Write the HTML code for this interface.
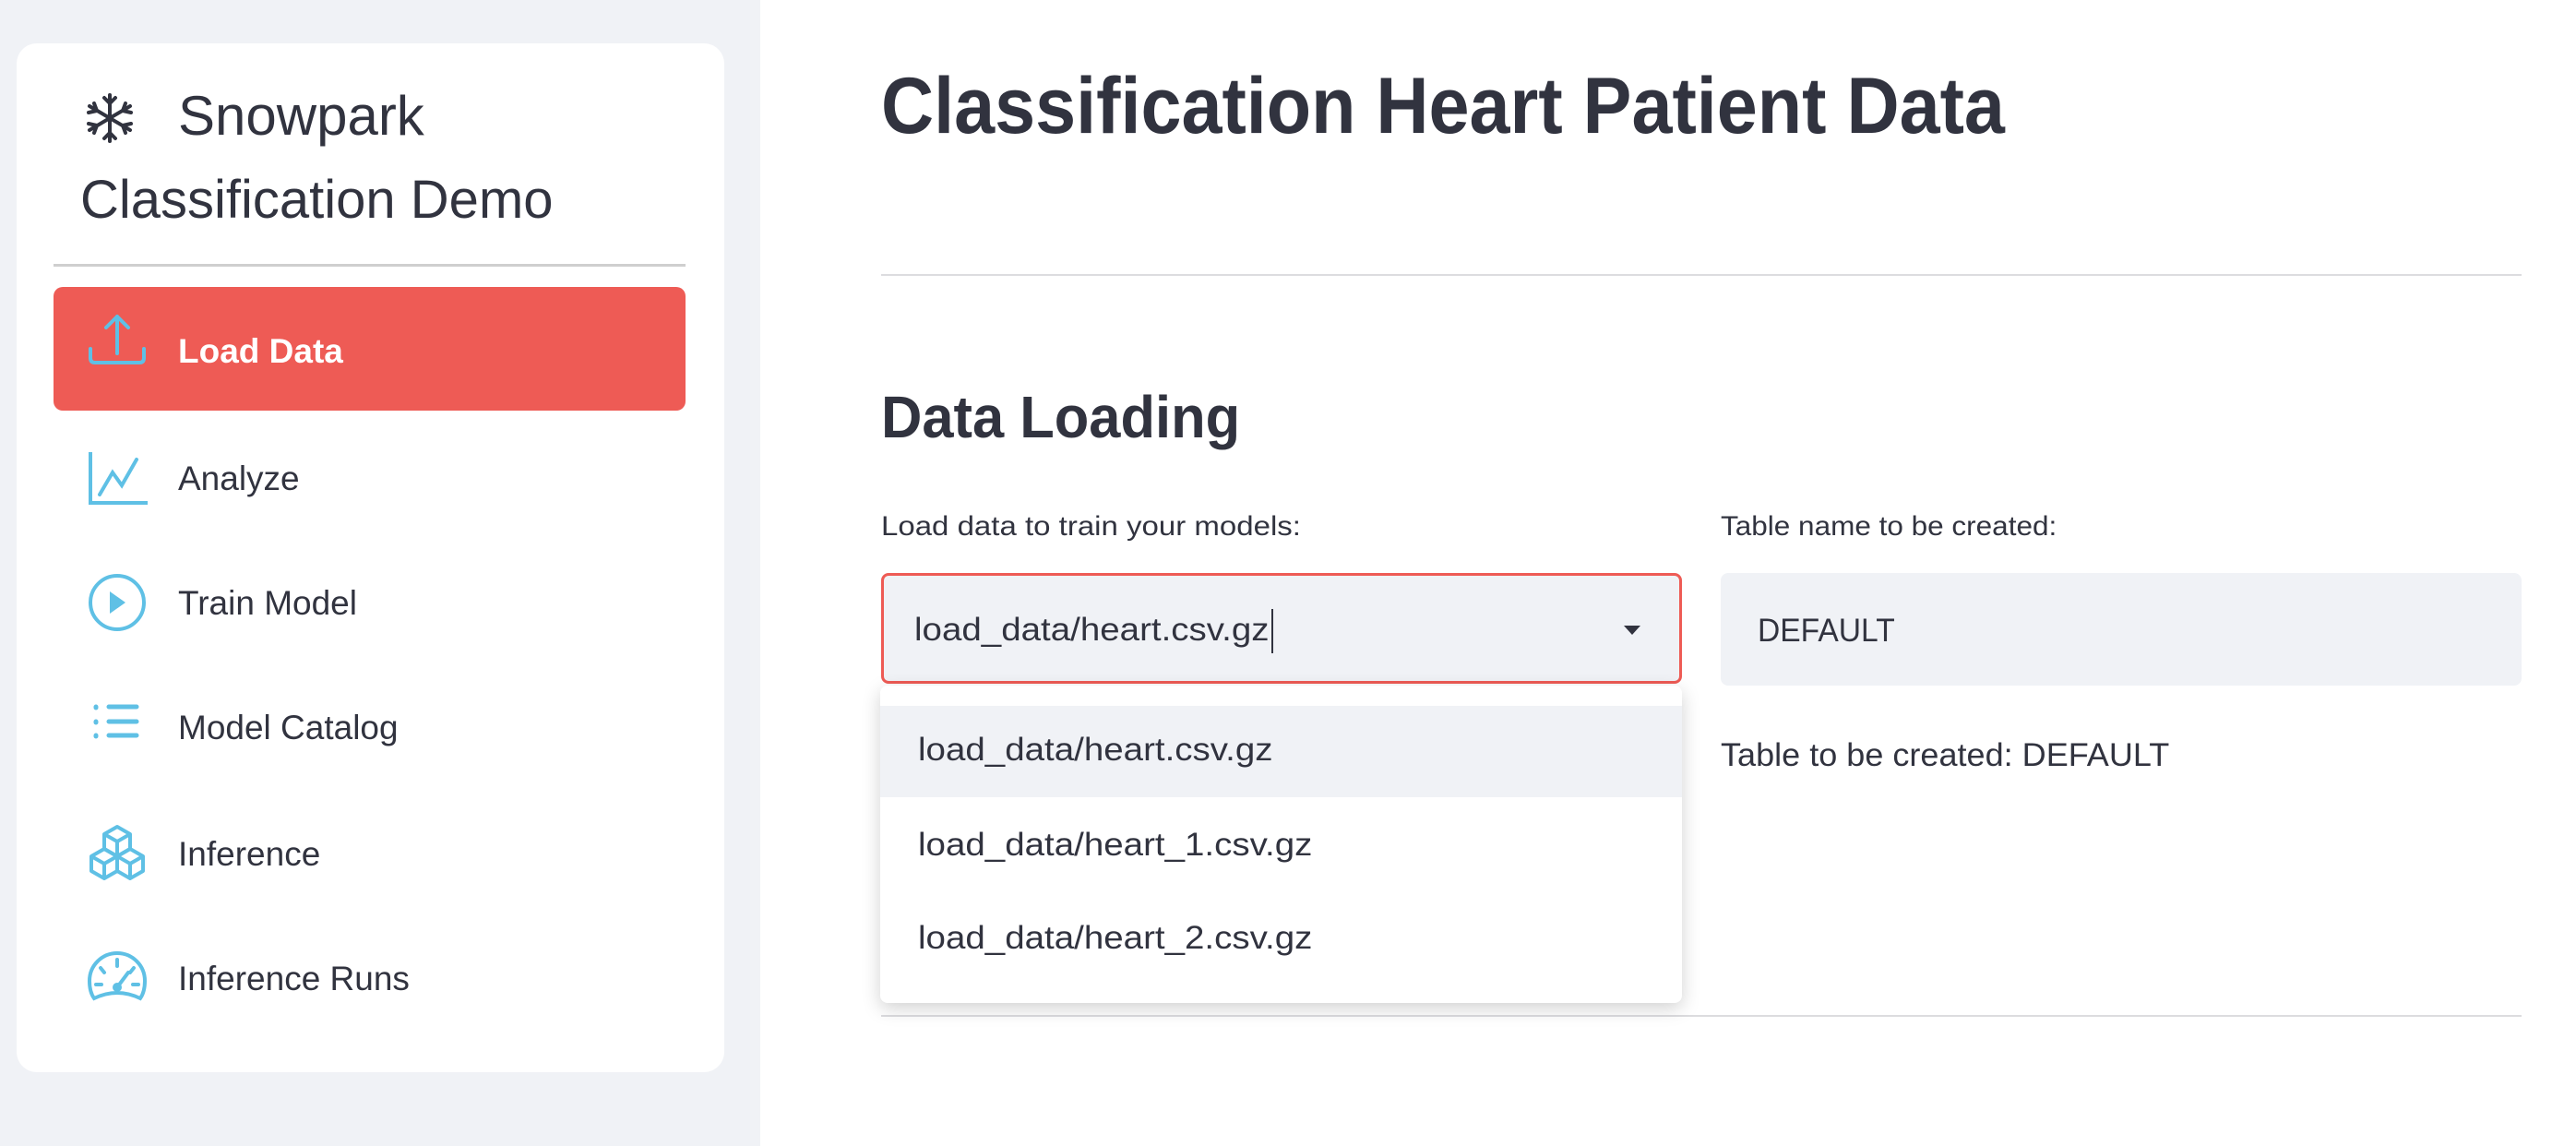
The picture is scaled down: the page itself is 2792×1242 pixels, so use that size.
<!DOCTYPE html>
<html><head><meta charset="utf-8"><style>
*{margin:0;padding:0;box-sizing:border-box}
body{width:2792px;height:1242px;background:#fff;position:relative;overflow:hidden;font-family:"Liberation Sans",sans-serif;color:#31333f}
.side{position:absolute;left:0;top:0;width:824px;height:1242px;background:#f0f2f6}
.card{position:absolute;left:18px;top:47px;width:767px;height:1115px;background:#fff;border-radius:22px}
.abs{position:absolute;white-space:nowrap}
.nav{position:absolute;left:193px;font-size:38px;color:#31333f;line-height:1}
.hr{position:absolute;height:2px;background:#dcdcdf}
.t{transform-origin:left top;line-height:1}
</style></head><body>
<div class="side"><div class="card"></div></div>

<svg class="abs" style="left:92px;top:100px" width="54" height="56" viewBox="0 0 54 56" fill="none" stroke="#31333f" stroke-width="4" stroke-linecap="round">
<line x1="27" y1="3" x2="27" y2="53"/><line x1="5" y1="15" x2="49" y2="41"/><line x1="5" y1="41" x2="49" y2="15"/>
<path d="M21 6l6 6 6-6M21 50l6-6 6 6M4 22l9-2-3-8M50 34l-9 2 3 8M4 34l9 2-3 8M50 22l-9-2 3-8"/>
</svg>
<div class="abs" style="left:193px;top:96px;font-size:60px;line-height:1">Snowpark</div>
<div class="abs" style="left:87px;top:188px;font-size:58px;line-height:1">Classification Demo</div>
<div class="abs" style="left:58px;top:286px;width:685px;height:3px;background:#cfcfcf"></div>

<div class="abs" style="left:58px;top:311px;width:685px;height:134px;background:#ee5b55;border-radius:10px"></div>
<svg class="abs" style="left:94px;top:338px" width="66" height="60" viewBox="0 0 66 60" fill="none" stroke="#5fc0e5" stroke-width="4" stroke-linecap="round" stroke-linejoin="round">
<path d="M33 5v40M21 17l12-12 12 12M4 40v10q0 5 5 5h48q5 0 5-5V40"/></svg>
<div class="nav" style="top:362px;color:#fff;font-weight:bold;font-size:37px">Load Data</div>

<svg class="abs" style="left:94px;top:488px" width="66" height="60" viewBox="0 0 66 60" fill="none" stroke="#5fc0e5" stroke-width="4">
<path d="M4 2v55h62"/><path d="M14 48l14-24 10 14 16-28" stroke-linecap="round"/></svg>
<div class="nav" style="top:500px;font-size:37px">Analyze</div>

<svg class="abs" style="left:94px;top:620px" width="66" height="66" viewBox="0 0 66 66" fill="none" stroke="#5fc0e5" stroke-width="4">
<ellipse cx="33" cy="33" rx="29" ry="29"/><path d="M25 21l17 12-17 12z" fill="#5fc0e5" stroke="none"/></svg>
<div class="nav" style="top:635px;font-size:37px">Train Model</div>

<svg class="abs" style="left:94px;top:758px" width="66" height="50" viewBox="0 0 66 50" fill="none" stroke="#5fc0e5" stroke-width="5" stroke-linecap="round">
<path d="M10 8v1M10 24v1M10 39v1M24 8h30M24 24h30M24 39h30"/></svg>
<div class="nav" style="top:770px;font-size:37px">Model Catalog</div>

<svg class="abs" style="left:94px;top:893px" width="66" height="66" viewBox="0 0 66 66" fill="none" stroke="#5fc0e5" stroke-width="4" stroke-linejoin="round">
<path d="M33 3l14 8v16l-14 8-14-8V11z M19 11l14 8 14-8 M33 19v16"/>
<path d="M19 27l14 8v16l-14 8-14-8V35z M5 35l14 8 14-8 M19 43v16"/>
<path d="M47 27l14 8v16l-14 8-14-8V35z M33 35l14 8 14-8 M47 43v16"/></svg>
<div class="nav" style="top:907px;font-size:37px">Inference</div>

<svg class="abs" style="left:94px;top:1030px" width="66" height="60" viewBox="0 0 66 60" fill="none" stroke="#5fc0e5" stroke-width="4" stroke-linecap="round">
<path d="M8 52Q3 45 3 33a30 30 0 0 1 60 0q0 12-5 19Q33 40 8 52z"/>
<path d="M33 10v7M15 19l4 5M51 19l-4 5M10 37h6M50 37h6M33 40l12-16"/><circle cx="33" cy="40" r="3" fill="#5fc0e5"/></svg>
<div class="nav" style="top:1042px;font-size:37px">Inference Runs</div>

<div class="abs t" style="left:955px;top:72px;font-size:86px;font-weight:bold;transform:scaleX(0.92)">Classification Heart Patient Data</div>
<div class="hr" style="left:955px;top:297px;width:1778px"></div>
<div class="abs t" style="left:955px;top:420px;font-size:64px;font-weight:bold;transform:scaleX(0.96)">Data Loading</div>
<div class="abs t" style="left:955px;top:556px;font-size:30px;transform:scaleX(1.1)">Load data to train your models:</div>
<div class="abs t" style="left:1865px;top:556px;font-size:30px;transform:scaleX(1.05)">Table name to be created:</div>

<div class="abs" style="left:955px;top:621px;width:868px;height:120px;background:#f0f2f6;border:3px solid #ee5b55;border-radius:8px"></div>
<div class="abs t" style="left:991px;top:665px;font-size:35px;transform:scaleX(1.1)">load_data/heart.csv.gz</div>
<div class="abs" style="left:1378px;top:660px;width:2px;height:48px;background:#31333f"></div>
<svg class="abs" style="left:1760px;top:678px" width="18" height="10"><path d="M0 0h18L9 10z" fill="#31333f"/></svg>

<div class="abs" style="left:1865px;top:621px;width:868px;height:122px;background:#f0f2f6;border-radius:8px"></div>
<div class="abs t" style="left:1905px;top:666px;font-size:35px;transform:scaleX(0.96)">DEFAULT</div>

<div class="abs t" style="left:1865px;top:801px;font-size:35px;transform:scaleX(1.03)">Table to be created: DEFAULT</div>

<div class="hr" style="left:955px;top:1100px;width:1778px"></div>

<div class="abs" style="left:954px;top:743px;width:869px;height:344px;background:#fff;border-radius:8px;box-shadow:0 6px 20px rgba(0,0,0,0.18)"></div>
<div class="abs" style="left:954px;top:765px;width:869px;height:99px;background:#f0f2f6"></div>
<div class="abs t" style="left:995px;top:795px;font-size:35px;transform:scaleX(1.1)">load_data/heart.csv.gz</div>
<div class="abs t" style="left:995px;top:898px;font-size:35px;transform:scaleX(1.1)">load_data/heart_1.csv.gz</div>
<div class="abs t" style="left:995px;top:999px;font-size:35px;transform:scaleX(1.1)">load_data/heart_2.csv.gz</div>
</body></html>
